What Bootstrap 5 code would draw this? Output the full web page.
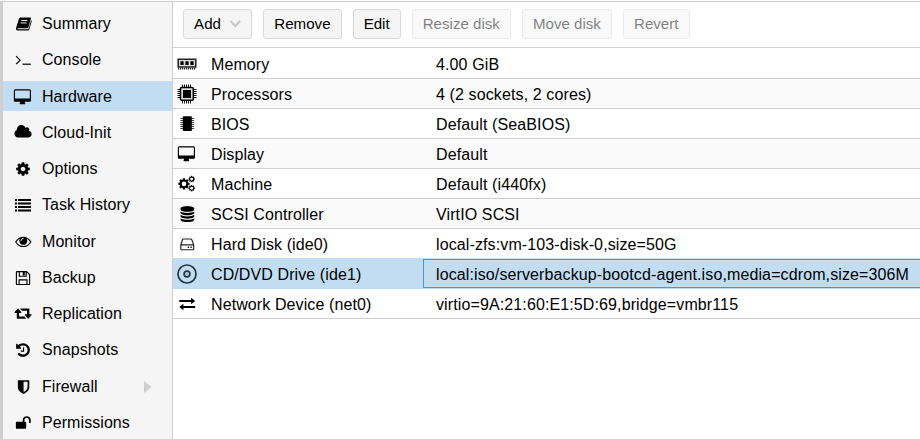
<!DOCTYPE html>
<html lang="en">
<head>
<meta charset="utf-8">
<meta name="viewport" content="width=device-width, initial-scale=1">
<title>Hardware</title>
<link href="https://cdn.jsdelivr.net/npm/bootstrap@5.3.0/dist/css/bootstrap.min.css" rel="stylesheet">
<style>
body{font:16px/20px "Liberation Sans",Arial,sans-serif;color:#000;background:#fff}
.app-shell{height:439px;border-top:1px solid #cfcfcf;margin-top:1px}
.side-panel{width:173px;background:#f5f5f5;border-left:3px solid #cfcfcf;border-right:1px solid #cfcfcf;padding-top:6.5px;gap:6.25px}
.side-panel .side-link{height:30px;padding:1px 0 0 10px;color:#000;gap:9px;letter-spacing:.07px}
.side-panel .side-link.active{background:#c2ddf2}
.glyph{width:20px;height:20px;flex:none;overflow:visible}
.tool-strip{height:46px;padding:7px 10px 0;border-bottom:1px solid #cfcfcf;gap:10.9px}
.tool-btn{--bs-btn-padding-x:10.1px;--bs-btn-padding-y:0;--bs-btn-font-size:15.1px;--bs-btn-line-height:28px;--bs-btn-bg:#f5f5f5;--bs-btn-color:#000;--bs-btn-border-color:#d8d8d8;--bs-btn-border-radius:3px;--bs-btn-disabled-bg:#f5f5f5;--bs-btn-disabled-color:#000;--bs-btn-disabled-border-color:#d8d8d8;--bs-btn-disabled-opacity:.5;height:30px}
.add-caret{margin-left:7.3px}
.hw-row{height:30px;border-bottom:1px solid #cfcfcf;padding-left:4px}
.hw-row:first-child{height:31px;padding-top:1px}
.hw-row:nth-child(even){background:#fafafa}
.hw-row.before-sel{height:29px;border:0}
.hw-row.hw-row.selected{height:31px;border:0;background:#c2ddf2}
.hw-name{width:226px;padding:2px 0 0 14px;letter-spacing:.1px}
.hw-value{padding:2px 0 0 13px;letter-spacing:.115px}
.selected .hw-value{height:29px;border:1px solid #4a97d6;border-right:0;padding:1px 0 0 12px;line-height:27px}
</style>
<script src="https://cdn.jsdelivr.net/npm/bootstrap@5.3.0/dist/js/bootstrap.bundle.min.js"></script>
</head>
<body>
<svg width="0" height="0" class="d-none">
<defs>
<path id="p-cog" d="M1152 896q0-106-75-181t-181-75-181 75-75 181 75 181 181 75 181-75 75-181zm512-109v222q0 12-8 23t-20 13l-185 28q-19 54-39 91 35 50 107 138 10 12 10 25t-9 23q-27 37-99 108t-94 71q-12 0-26-9l-138-108q-44 23-91 38-16 136-29 186-7 28-36 28h-222q-14 0-24.5-8.5t-11.5-21.5l-28-184q-49-16-90-37l-141 107q-10 9-25 9-14 0-25-11-126-114-165-168-7-10-7-23 0-12 8-23 15-21 51-66.5t54-70.5q-27-50-41-99l-183-27q-13-2-21-12.5t-8-23.5v-222q0-12 8-23t19-13l186-28q14-46 39-92-40-57-107-138-10-12-10-24 0-10 9-23 26-36 98.5-107.5t94.5-71.5q13 0 26 10l138 107q44-23 91-38 16-136 29-186 7-28 36-28h222q14 0 24.5 8.5t11.5 21.5l28 184q49 16 90 37l142-107q9-9 24-9 13 0 25 10 129 119 165 170 7 8 7 22 0 12-8 23-15 21-51 66.5t-54 70.5q26 50 41 98l183 28q13 2 21 12.5t8 23.5z"/>
</defs>
<symbol id="i-book" viewBox="0 0 20 20"><path d="M8 3.6h9c.8 0 1.1.5.9 1.200l-2.500 8.400c-.2.7-.7 1.100-1.400 1.100H5.200c-.8 0-1 .9 0 .9h9.300c.6 0 1-.3 1.200-.9l2.500-8.100c.6.3.7.8.5 1.300l-2.400 7.700c-.2.8-.8 1.300-1.600 1.300H5c-1.500 0-2.400-1.100-2-2.400L5.800 5.200C6.100 4.200 6.900 3.600 8 3.600z"/><path d="M8.300 6.500h6M7.600 8.900h6" stroke="#f5f5f5" stroke-width="1"/></symbol>
<symbol id="i-terminal" viewBox="0 0 20 20"><path d="M3.100 6.200l4 4-4 4" fill="none" stroke="#000" stroke-width="1.200"/><path d="M9.500 13.600h8.300v1.200H9.500z"/></symbol>
<symbol id="i-desktop" viewBox="0 0 20 20"><path transform="translate(1.400 2.300) scale(.00893)" d="M1728 992v-832q0-13-9.500-22.500t-22.500-9.500h-1600q-13 0-22.500 9.500t-9.500 22.500v832q0 13 9.500 22.500t22.500 9.500h1600q13 0 22.500-9.500t9.500-22.500zm128-832v1088q0 66-47 113t-113 47h-544q0 37 16 77.500t32 71 16 43.500q0 26-19 45t-45 19h-512q-26 0-45-19t-19-45q0-14 16-44t32-70 16-78h-544q-66 0-113-47t-47-113v-1088q0-66 47-113t113-47h1600q66 0 113 47t47 113z"/></symbol>
<symbol id="i-cloud" viewBox="0 0 20 20"><path transform="translate(.9 .9) scale(.00893)" d="M1984 1152q0 159-112.500 271.500t-271.500 112.500h-1088q-185 0-316.500-131.500t-131.500-316.500q0-132 71-241.500t187-163.500q-2-28-2-43 0-212 150-362t362-150q158 0 286.500 88t187.500 230q70-62 166-62 106 0 181 75t75 181q0 75-41 138 129 30 213 134.500t84 239.500z"/></symbol>
<symbol id="i-cog" viewBox="0 0 20 20"><use href="#p-cog" transform="translate(2 2) scale(.00893)"/></symbol>
<symbol id="i-list" viewBox="0 0 20 20"><path d="M2 4h2v2H2zM5 4h13v2H5zM2 7.600h2v1.800H2zM5 7.600h13v1.800H5zM2 11h2v2H2zM5 11h13v2H5zM2 14.600h2v1.800H2zM5 14.600h13v1.800H5z"/></symbol>
<symbol id="i-eye" viewBox="0 0 20 20"><path transform="translate(2.300 1.400) scale(.00893)" d="M1664 960q-152-236-381-353 61 104 61 225 0 185-131.500 316.500t-316.500 131.500-316.500-131.500-131.500-316.500q0-121 61-225-229 117-381 353 133 205 333.500 326.500t434.500 121.500 434.500-121.500 333.500-326.500zm-720-384q0-20-14-34t-34-14q-125 0-214.500 89.500t-89.500 214.500q0 20 14 34t34 14 34-14 14-34q0-86 61-147t147-61q20 0 34-14t14-34zm848 384q0 34-20 69-140 230-376.500 368.500t-499.500 138.500-499.500-139-376.500-368q-20-35-20-69t20-69q140-229 376.500-368t499.500-139 499.500 139 376.500 368q20 35 20 69z"/></symbol>
<symbol id="i-floppy" viewBox="0 0 20 20"><path d="M4 3.600h9.600l3 3v9.300c0 .4-.2.6-.6.6H4c-.4 0-.6-.2-.6-.6V4.200c0-.4.2-.6.6-.6zM6.300 3.600v4.600h6.900V3.600M6.100 16.500v-4.700h7.900v4.700" fill="none" stroke="#000" stroke-width="1.150"/><path d="M9.800 4h2v3.500h-2z"/></symbol>
<symbol id="i-retweet" viewBox="0 0 20 20"><path transform="translate(1.500 1) scale(.00893)" d="M1280 1504q0 13-9.500 22.500t-22.500 9.500h-960q-8 0-13.500-2t-9-7-5.500-8-3-11.500-1-11.500v-600h-192q-26 0-45-19t-19-45q0-24 15-41l320-384q19-22 49-22t49 22l320 384q15 17 15 41 0 26-19 45t-45 19h-192v384h576q16 0 25 11l160 192q7 10 7 21zm640-416q0 24-15 41l-320 384q-20 23-49 23t-49-23l-320-384q-15-17-15-41 0-26 19-45t45-19h192v-384h-576q-16 0-25-12l-160-192q-7-9-7-20 0-13 9.500-22.500t22.500-9.500h960q8 0 13.500 2t9 7 5.500 8 3 11.500 1 11.500v600h192q26 0 45 19t19 45z"/></symbol>
<symbol id="i-history" viewBox="0 0 20 20"><path transform="translate(2 2) scale(.00893)" d="M1664 896q0 156-61 298t-164 245-245 164-298 61q-172 0-327-72.500t-264-204.500q-7-10-6.500-22.500t8.500-20.500l137-138q10-9 25-9 16 2 23 12 73 95 179 147t225 52q104 0 198.500-40.500t163.500-109.500 109.500-163.500 40.500-198.500-40.500-198.500-109.500-163.500-163.500-109.500-198.500-40.500q-98 0-188 35.500t-160 101.500l137 138q31 30 14 69-17 40-59 40h-448q-26 0-45-19t-19-45v-448q0-42 40-59 39-17 69 14l130 129q107-101 244.500-156.500t284.500-55.500q156 0 298 61t245 164 164 245 61 298zm-640-288v448q0 14-9 23t-23 9h-320q-14 0-23-9t-9-23v-64q0-14 9-23t23-9h224v-352q0-14 9-23t23-9h64q14 0 23 9t9 23z"/></symbol>
<symbol id="i-shield" viewBox="0 0 20 20"><path transform="translate(2 2) scale(.00893)" d="M1408 960v-640h-448v1137q119-63 213-137 235-184 235-360zm192-768v768q0 86-33.500 170.500t-83 150-118 127.500-126.500 103-121 77.500-89.500 49.500-42.500 20q-12 6-26 6t-26-6q-16-7-42.500-20t-89.500-49.500-121-77.500-126.500-103-118-127.500-83-150-33.500-170.500v-768q0-26 19-45t45-19h1152q26 0 45 19t19 45z"/></symbol>
<symbol id="i-unlock" viewBox="0 0 20 20"><path transform="translate(2.300 2) scale(.00893)" d="M1728 576v256q0 26-19 45t-45 19h-64q-26 0-45-19t-19-45v-256q0-106-75-181t-181-75-181 75-75 181v192h96q40 0 68 28t28 68v576q0 40-28 68t-68 28h-960q-40 0-68-28t-28-68v-576q0-40 28-68t68-28h672v-192q0-185 131.500-316.500t316.500-131.500 316.500 131.500 131.500 316.500z"/></symbol>
<symbol id="i-memory" viewBox="0 0 20 20"><path d="M1.200 5.200h17.600v7.800H1.200z" fill="#ddd" stroke="#222" stroke-width="1.500"/><path d="M3.400 7.200h3.200v3.800H3.400zM8.400 7.200h3.200v3.800H8.400zM13.400 7.200h3.200v3.800h-3.200z"/><path d="M1 14.600h18" stroke="#222" stroke-width="1.700" stroke-dasharray="1.200 .8"/></symbol>
<symbol id="i-cpu" viewBox="0 0 20 20"><path d="M5.500.5v19M7.500.5v19M9.500.5v19M11.500.5v19M13.500.5v19M.5 5.500h19M.5 7.500h19M.5 9.500h19M.5 11.500h19M.5 13.500h19" stroke="#111" stroke-width="1"/><rect x="3.500" y="3.500" width="12.800" height="12.800" rx="1" fill="#ddd" stroke="#000" stroke-width="1.500"/><path d="M6 6h8v8H6z"/></symbol>
<symbol id="i-chip" viewBox="0 0 20 20"><path d="M3.300 4.500h13.900M3.300 6.500h13.900M3.300 8.500h13.900M3.300 10.500h13.900M3.300 12.500h13.900M3.300 14.500h13.900" stroke="#444" stroke-width="1"/><rect x="5.800" y="2.300" width="9" height="14.700" rx=".7"/></symbol>
<symbol id="i-cogs" viewBox="0 0 20 20"><use href="#p-cog" transform="translate(.4 3.300) scale(.0073)"/><use href="#p-cog" transform="translate(10.900 1.300) scale(.0042)"/><use href="#p-cog" transform="translate(10.900 10.400) scale(.0042)"/><g fill="#fff"><circle cx="6.940" cy="9.840" r="2.300"/><circle cx="14.660" cy="5.060" r="1.350"/><circle cx="14.660" cy="14.160" r="1.350"/></g></symbol>
<symbol id="i-db" viewBox="0 0 20 20"><g transform="translate(2.400 2.100) scale(.00893)"><path d="M896 0q208 0 385 34.500t280 93.500 103 128v128q0 69-103 128t-280 93.500-385 34.500-385-34.500-280-93.500-103-128v-128q0-69 103-128t280-93.500 385-34.500z"/><path id="p-dbl" d="M896 768q237 0 443-43t325-127v170q0 69-103 128t-280 93.500-385 34.500-385-34.500-280-93.500-103-128v-170q119 84 325 127t443 43z"/><use href="#p-dbl" y="384"/><use href="#p-dbl" y="768"/></g></symbol>
<symbol id="i-hdd" viewBox="0 0 20 20"><path d="M6.300 5h7.400c.6 0 .9.300 1.100.8l1.900 5v4.100c0 .5-.3.800-.8.800H4.600c-.5 0-.8-.3-.8-.8v-4.100l1.700-5c.1-.5.400-.8.800-.8zM3.800 10.800h12.900" fill="none" stroke="#222" stroke-width="1.150"/><path d="M10.800 12.600h1.300v1.300h-1.300zM13.400 12.600h1.300v1.300h-1.300z"/></symbol>
<symbol id="i-disc" viewBox="0 0 20 20"><g fill="none" stroke="#263541"><circle cx="10" cy="10" r="9" stroke-width="1.700"/><circle cx="10" cy="10" r="2.900" stroke-width="1.700"/></g><circle cx="10" cy="10" r=".8" fill="#6c7c88"/></symbol>
<symbol id="i-exchange" viewBox="0 0 20 20"><path d="M2.300 6h11.800V3.800L18.200 7l-4.100 3.200V8H2.300zM18.200 12H6.400V9.800L2.300 13l4.100 3.200V14h11.800z"/></symbol>
</svg>

<div class="app-shell d-flex overflow-hidden">
  <nav class="side-panel nav d-flex flex-column flex-nowrap flex-shrink-0">
    <a class="side-link nav-link d-flex align-items-center"><svg class="glyph"><use href="#i-book"/></svg>Summary</a>
    <a class="side-link nav-link d-flex align-items-center"><svg class="glyph"><use href="#i-terminal"/></svg>Console</a>
    <a class="side-link nav-link d-flex align-items-center active"><svg class="glyph"><use href="#i-desktop"/></svg>Hardware</a>
    <a class="side-link nav-link d-flex align-items-center"><svg class="glyph"><use href="#i-cloud"/></svg>Cloud-Init</a>
    <a class="side-link nav-link d-flex align-items-center"><svg class="glyph"><use href="#i-cog"/></svg>Options</a>
    <a class="side-link nav-link d-flex align-items-center"><svg class="glyph"><use href="#i-list"/></svg>Task History</a>
    <a class="side-link nav-link d-flex align-items-center"><svg class="glyph"><use href="#i-eye"/></svg>Monitor</a>
    <a class="side-link nav-link d-flex align-items-center"><svg class="glyph"><use href="#i-floppy"/></svg>Backup</a>
    <a class="side-link nav-link d-flex align-items-center"><svg class="glyph"><use href="#i-retweet"/></svg>Replication</a>
    <a class="side-link nav-link d-flex align-items-center"><svg class="glyph"><use href="#i-history"/></svg>Snapshots</a>
    <a class="side-link nav-link d-flex align-items-center"><svg class="glyph"><use href="#i-shield"/></svg>Firewall<svg class="ms-auto me-3" width="12" height="14"><path d="M0 1l7.500 6L0 13z" fill="#cfcfcf"/></svg></a>
    <a class="side-link nav-link d-flex align-items-center"><svg class="glyph"><use href="#i-unlock"/></svg>Permissions</a>
  </nav>
  <main class="flex-grow-1 overflow-hidden">
    <div class="tool-strip d-flex">
      <button class="btn tool-btn d-flex align-items-center">Add<svg class="add-caret" width="13" height="10"><path d="M2.500 2l4.800 5 4.800-5" fill="none" stroke="#c8c8c8" stroke-width="2"/></svg></button>
      <button class="btn tool-btn">Remove</button>
      <button class="btn tool-btn">Edit</button>
      <button class="btn tool-btn" disabled>Resize disk</button>
      <button class="btn tool-btn" disabled>Move disk</button>
      <button class="btn tool-btn" disabled>Revert</button>
    </div>
    <div class="hw-grid">
      <div class="hw-row d-flex align-items-center text-nowrap"><svg class="glyph"><use href="#i-memory"/></svg><div class="hw-name">Memory</div><div class="hw-value">4.00 GiB</div></div>
      <div class="hw-row d-flex align-items-center text-nowrap"><svg class="glyph"><use href="#i-cpu"/></svg><div class="hw-name">Processors</div><div class="hw-value">4 (2 sockets, 2 cores)</div></div>
      <div class="hw-row d-flex align-items-center text-nowrap"><svg class="glyph"><use href="#i-chip"/></svg><div class="hw-name">BIOS</div><div class="hw-value">Default (SeaBIOS)</div></div>
      <div class="hw-row d-flex align-items-center text-nowrap"><svg class="glyph"><use href="#i-desktop"/></svg><div class="hw-name">Display</div><div class="hw-value">Default</div></div>
      <div class="hw-row d-flex align-items-center text-nowrap"><svg class="glyph"><use href="#i-cogs"/></svg><div class="hw-name">Machine</div><div class="hw-value">Default (i440fx)</div></div>
      <div class="hw-row d-flex align-items-center text-nowrap"><svg class="glyph"><use href="#i-db"/></svg><div class="hw-name">SCSI Controller</div><div class="hw-value">VirtIO SCSI</div></div>
      <div class="hw-row before-sel d-flex align-items-center text-nowrap"><svg class="glyph"><use href="#i-hdd"/></svg><div class="hw-name">Hard Disk (ide0)</div><div class="hw-value">local-zfs:vm-103-disk-0,size=50G</div></div>
      <div class="hw-row selected d-flex align-items-center text-nowrap"><svg class="glyph"><use href="#i-disc"/></svg><div class="hw-name">CD/DVD Drive (ide1)</div><div class="hw-value flex-grow-1">local:iso/serverbackup-bootcd-agent.iso,media=cdrom,size=306M</div></div>
      <div class="hw-row d-flex align-items-center text-nowrap"><svg class="glyph"><use href="#i-exchange"/></svg><div class="hw-name">Network Device (net0)</div><div class="hw-value">virtio=9A:21:60:E1:5D:69,bridge=vmbr115</div></div>
    </div>
  </main>
</div>
</body>
</html>
